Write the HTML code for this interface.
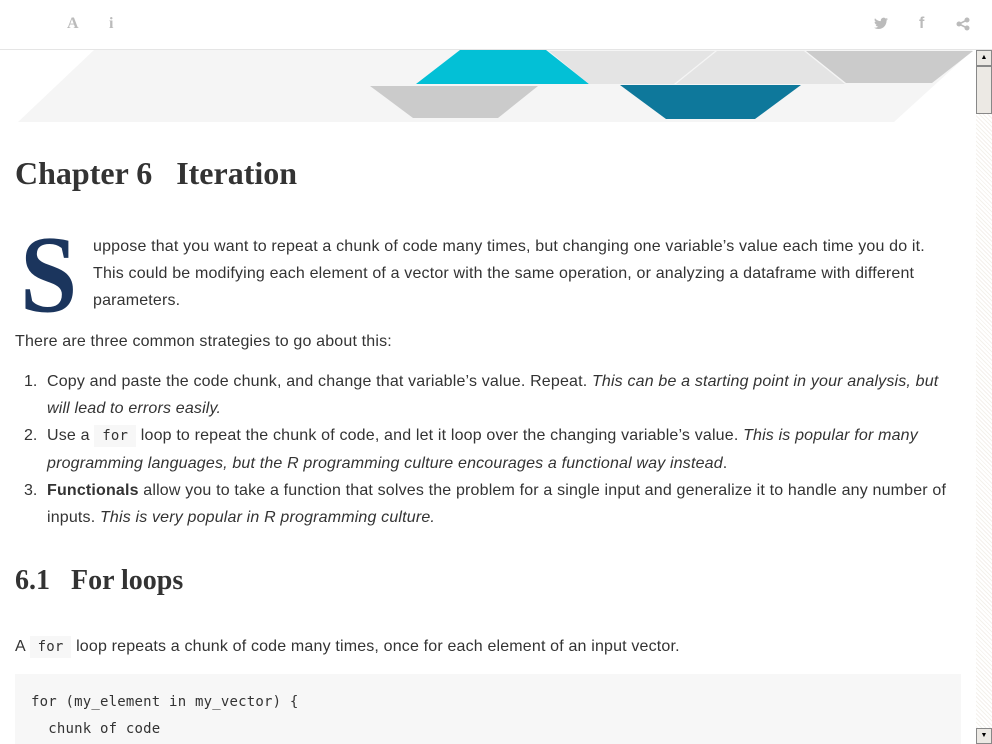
<!DOCTYPE html>
<html><head><meta charset="utf-8"><style>
html,body{margin:0;padding:0;background:#fff;overflow:hidden}
body{width:992px;height:744px;position:relative;font-family:"Liberation Sans",sans-serif;color:#333;font-size:16px}
.hdr{position:absolute;left:0;top:0;width:992px;height:49px;border-bottom:1px solid #e5e5e5;background:#fff}
.ic{position:absolute;top:15px;color:#bbb;font-size:16px}
.sb{position:absolute;right:0;top:50px;width:16px;height:694px;background:repeating-linear-gradient(45deg,#f4f1ec 0 1px,#fff 1px 3px)}
.btn{position:absolute;left:0;width:14px;height:14px;background:#ece9e4;border:1px solid #888;font-size:7px;text-align:center;line-height:14px;color:#000}
.main{position:absolute;left:15px;top:50px;width:946px}
h1{font-family:"Liberation Serif",serif;font-size:32px;font-weight:bold;margin:0;position:absolute;top:105px;left:0}
h2{font-family:"Liberation Serif",serif;font-size:28px;font-weight:bold;margin:0;position:absolute;top:515px;left:0}
p{margin:0;line-height:27px;letter-spacing:0.17px}
code{font-family:"DejaVu Sans Mono",monospace;font-size:14px;background:#f7f7f7;padding:3px 8px;letter-spacing:0.2px}
.t{position:absolute;left:0}
ol{margin:0;padding-left:32px;line-height:27px;letter-spacing:0.17px;list-style:none}
ol li{position:relative}
.n{position:absolute;left:-23px;letter-spacing:0}
pre{margin:0;position:absolute;left:0;top:624px;width:946px;height:80px;background:#f7f7f7;font-family:"DejaVu Sans Mono",monospace;font-size:14px;letter-spacing:0.2px;line-height:27px;padding:15px 16px;box-sizing:border-box}
</style></head><body>
<div class="hdr">
<span class="ic" style="left:67px;font-family:'Liberation Serif',serif;font-weight:bold">A</span>
<span class="ic" style="left:109px;font-family:'Liberation Serif',serif;font-weight:bold">i</span>
<svg class="ic" style="left:874px;top:17px" width="14" height="13" viewBox="0 0 24 20"><path fill="#bbb" d="M24 2.4a10 10 0 0 1-2.8.8A5 5 0 0 0 23.3.4a10 10 0 0 1-3.1 1.2A4.9 4.9 0 0 0 11.8 6 14 14 0 0 1 1.7.9a4.9 4.9 0 0 0 1.5 6.6 4.900 4.900 0 0 1-2.2-.6 4.9 4.9 0 0 0 3.9 4.9 5 5 0 0 1-2.2.1 4.9 4.9 0 0 0 4.6 3.4A9.900 9.900 0 0 1 0 17.300 14 14 0 0 0 7.500 19.500c9.100 0 14-7.500 14-14v-.6A10 10 0 0 0 24 2.400z"/></svg>
<span class="ic" style="left:919px;font-weight:bold">f</span>
<svg class="ic" style="left:956px;top:17px" width="14" height="14" viewBox="0 0 14 14"><circle cx="11" cy="3" r="2.5" fill="#bbb"/><circle cx="3" cy="7" r="2.5" fill="#bbb"/><circle cx="11" cy="11" r="2.5" fill="#bbb"/><path d="M11 3L3 7L11 11" stroke="#bbb" stroke-width="1.6" fill="none"/></svg>
</div>
<svg style="position:absolute;left:0;top:50px" width="976" height="75">
<polygon points="94,0 973,0 894,72 18,72" fill="#f5f5f5"/>
<polygon points="460,0 546,0 589,34 416,34" fill="#03c0d6"/>
<polygon points="549,1 715,1 674,34 589,34" fill="#e4e4e4"/>
<polygon points="717,1 804,1 845,34 676,34" fill="#e4e4e4"/>
<polygon points="806,1 973,1 932,33 846,33" fill="#cbcbcb"/>
<polygon points="370,36 538,36 498,68 413,68" fill="#cbcbcb"/>
<polygon points="620,35 801,35 755,69 666,69" fill="#0e789b"/>
</svg>
<div class="main">
<h1>Chapter 6&nbsp;&nbsp; Iteration</h1>
<div class="t" style="top:176px;font-family:'Liberation Serif',serif;font-weight:bold;font-size:112px;line-height:100px;color:#1b355d;left:5px;transform:scaleX(0.92) scaleY(0.98);transform-origin:left top">S</div>
<p class="t" style="top:183px;left:78px;width:855px">uppose that you want to repeat a chunk of code many times, but changing one variable’s value each time you do it. This could be modifying each element of a vector with the same operation, or analyzing a dataframe with different parameters.</p>
<p class="t" style="top:278px">There are three common strategies to go about this:</p>
<ol class="t" style="top:318px;width:914px">
<li><span class="n">1.</span>Copy and paste the code chunk, and change that variable’s value. Repeat. <em>This can be a starting point in your analysis, but will lead to errors easily.</em></li>
<li><span class="n">2.</span>Use a <code>for</code> loop to repeat the chunk of code, and let it loop over the changing variable’s value. <em>This is popular for many programming languages, but the R programming culture encourages a functional way instead</em>.</li>
<li><span class="n">3.</span><b>Functionals</b> allow you to take a function that solves the problem for a single input and generalize it to handle any number of inputs. <em>This is very popular in R programming culture.</em></li>
</ol>
<h2>6.1&nbsp;&nbsp; For loops</h2>
<p class="t" style="top:583px">A <code>for</code> loop repeats a chunk of code many times, once for each element of an input vector.</p>
<pre>for (my_element in my_vector) {
  chunk of code</pre>
</div>
<div class="sb">
<div class="btn" style="top:0">▲</div>
<div class="btn" style="top:16px;height:46px"></div>
<div class="btn" style="top:678px">▼</div>
</div>
</body></html>
